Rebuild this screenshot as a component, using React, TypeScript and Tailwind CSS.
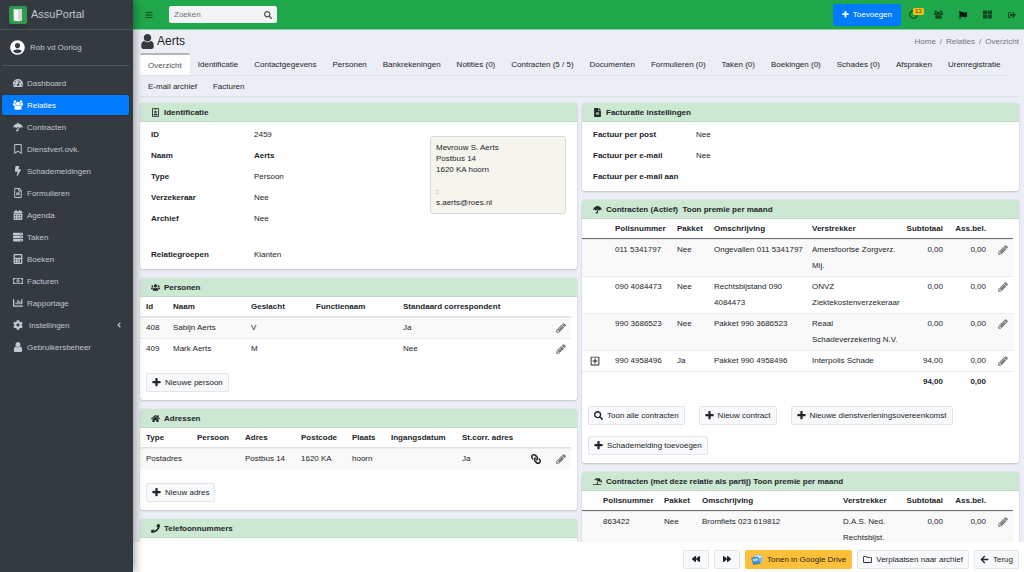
import type { ReactNode } from "react";
import {
  FaAngleLeft,
  FaArrowLeft,
  FaBackward,
  FaBars,
  FaBolt,
  FaCalculator,
  FaCalendarAlt,
  FaChartBar,
  FaCircleNotch,
  FaCog,
  FaFileAlt,
  FaFlag,
  FaForward,
  FaHome,
  FaLink,
  FaPhone,
  FaRegBookmark,
  FaRegFileAlt,
  FaRegFolder,
  FaRegIdBadge,
  FaRegMoneyBillAlt,
  FaRegPlusSquare,
  FaSearch,
  FaServer,
  FaSignOutAlt,
  FaTachometerAlt,
  FaThLarge,
  FaUmbrella,
  FaUmbrellaBeach,
  FaUserCircle,
  FaUsers,
} from "react-icons/fa";

type IconComp = (props: { className?: string }) => ReactNode;

function Plus({ className }: { className?: string }) {
  return (
    <svg viewBox="128 128 1536 1536" fill="currentColor" className={className}>
      <path d="M1600 736v192q0 40-28 68t-68 28h-416v416q0 40-28 68t-68 28h-192q-40 0-68-28t-28-68v-416h-416q-40 0-68-28t-28-68v-192q0-40 28-68t68-28h416v-416q0-40 28-68t68-28h192q40 0 68 28t28 68v416h416q40 0 68 28t28 68z" />
    </svg>
  );
}

function User({ className }: { className?: string }) {
  return (
    <svg viewBox="128 128 1536 1536" fill="currentColor" className={className}>
      <path d="M1536 1399q0 109-62.5 187t-150.5 78h-854q-88 0-150.5-78t-62.5-187q0-85 8.5-160.5t31.5-152 58.5-131 94-89 134.5-34.5q131 128 313 128t313-128q76 0 134.5 34.5t94 89 58.5 131 31.5 152 8.5 160.5zm-256-887q0 159-112.5 271.5t-271.5 112.5-271.5-112.5-112.5-271.5 112.5-271.5 271.5-112.5 271.5 112.5 112.5 271.5z" />
    </svg>
  );
}

function Group({ className }: { className?: string }) {
  return (
    <svg viewBox="0 0 1920 1792" fill="currentColor" className={className}>
      <path d="M593 896q-162 5-265 128h-134q-82 0-138-40.5t-56-118.5q0-353 124-353 6 0 43.5 21t97.5 42.5 119 21.5q67 0 133-23-5 37-5 66 0 159 93 293zm1071 637q0 120-73 189.5t-194 69.5h-874q-121 0-194-69.5t-73-189.5q0-53 3.5-103.5t14-109 26.5-108.5 43-97.5 62-81 85.5-53.5 111.5-20q10 0 43 21.5t73 48 107 48 135 21.5 135-21.5 107-48 73-48 43-21.5q61 0 111.5 20t85.5 53.5 62 81 43 97.5 26.5 108.5 14 109 3.5 103.5zm-1024-1277q0 106-75 181t-181 75-181-75-75-181 75-181 181-75 181 75 75 181zm704 384q0 159-112.5 271.5t-271.5 112.5-271.5-112.5-112.5-271.5 112.5-271.5 271.5-112.5 271.5 112.5 112.5 271.5zm576 225q0 78-56 118.5t-138 40.5h-134q-103-123-265-128 93-134 93-293 0-29-5-66 66 23 133 23 59 0 119-21.5t97.5-42.5 43.5-21q124 0 124 353zm-128-609q0 106-75 181t-181 75-181-75-75-181 75-181 181-75 181 75 75 181z" />
    </svg>
  );
}

function Pencil({ className }: { className?: string }) {
  return (
    <svg viewBox="96 128 1568 1568" fill="currentColor" className={className}>
      <path d="M491 1536l91-91-235-235-91 91v107h128v128h107zm523-928q0-22-22-22-10 0-17 7l-542 542q-7 7-7 17 0 22 22 22 10 0 17-7l542-542q7-7 7-17zm-54-192l416 416-832 832h-416v-416zm683 96q0 53-37 90l-166 166-416-416 166-165q36-38 90-38 53 0 91 38l235 234q37 39 37 91z" />
    </svg>
  );
}

const menu: { label: string; icon: IconComp; active?: boolean; tree?: boolean }[] = [
  { label: "Dashboard", icon: FaTachometerAlt },
  { label: "Relaties", icon: Group, active: true },
  { label: "Contracten", icon: FaUmbrella },
  { label: "Dienstverl.ovk.", icon: FaRegBookmark },
  { label: "Schademeldingen", icon: FaBolt },
  { label: "Formulieren", icon: FaRegFileAlt },
  { label: "Agenda", icon: FaCalendarAlt },
  { label: "Taken", icon: FaServer },
  { label: "Boeken", icon: FaCalculator },
  { label: "Facturen", icon: FaRegMoneyBillAlt },
  { label: "Rapportage", icon: FaChartBar },
  { label: "Instellingen", icon: FaCog, tree: true },
  { label: "Gebruikersbeheer", icon: User },
];

const tabs = [
  "Overzicht",
  "Identificatie",
  "Contactgegevens",
  "Personen",
  "Bankrekeningen",
  "Notities (0)",
  "Contracten (5 / 5)",
  "Documenten",
  "Formulieren (0)",
  "Taken (0)",
  "Boekingen (0)",
  "Schades (0)",
  "Afspraken",
  "Urenregistratie",
];

const contracten = [
  { polis: "011 5341797", pakket: "Nee", oms: "Ongevallen 011 5341797", verstrekker: "Amersfoortse Zorgverz. Mij.", sub: "0,00", ass: "0,00" },
  { polis: "090 4084473", pakket: "Nee", oms: "Rechtsbijstand 090 4084473", verstrekker: "ONVZ Ziektekostenverzekeraar", sub: "0,00", ass: "0,00" },
  { polis: "990 3686523", pakket: "Nee", oms: "Pakket 990 3686523", verstrekker: "Reaal Schadeverzekering N.V.", sub: "0,00", ass: "0,00" },
  { polis: "990 4958496", pakket: "Ja", oms: "Pakket 990 4958496", verstrekker: "Interpolis Schade", sub: "94,00", ass: "0,00", open: true },
];

function Logo() {
  return (
    <svg viewBox="0 0 18 18" className="size-[18px] shrink-0 rounded-xs shadow-md">
      <rect width="18" height="18" rx="1.5" fill="#2f9a4b" />
      <rect x="4.5" y="3" width="8.5" height="12" fill="#b9dcc1" />
      <path d="M5 3.2 9.6 4.4V15.6L5 14.4Z" fill="#f4f4f4" />
      <path d="M9.6 4.4 13 3V14.4L9.6 15.6Z" fill="#cfd8d1" />
    </svg>
  );
}

function DriveIcon() {
  return (
    <svg viewBox="0 0 24 22" className="h-[11px] w-3 shrink-0">
      <path d="M7 3 14 1 16 3 22 2 23 15 9 18Z" fill="#d8ecfa" stroke="#5aa0d8" />
      <path d="M1 8 14 6 18 19 5 21Z" fill="#3c92dc" stroke="#1c62ab" />
      <path d="M3 10 13 8.5 14.5 13 4.5 15Z" fill="#a9daf8" />
      <path d="M15 9 22 7 20 17 18 19Z" fill="#66b4ec" />
    </svg>
  );
}

function Sidebar() {
  return (
    <aside className="z-10 flex w-[133px] shrink-0 flex-col bg-[#343a40] text-[#c2c7d0] shadow-[2px_0_8px_rgba(0,0,0,0.35)]">
      <a href="#" className="flex h-[30px] items-center gap-1 border-b border-[#4b545c] pl-[9px] text-[11px]">
        <Logo />
        AssuPortal
      </a>
      <a href="#" className="mr-1 ml-[2px] flex h-9 items-center gap-[5px] border-b border-[#4f5962] pl-2">
        <FaUserCircle className="size-[15px] text-white" />
        Rob vd Oorlog
      </a>
      <nav className="mt-[7px] mr-1 ml-[2px]">
        <ul className="flex flex-col gap-[2px]">
          {menu.map(({ label, icon: Icon, active, tree }) => (
            <li key={label}>
              <a
                href="#"
                className={`flex h-5 items-center gap-1 rounded-xs pl-[11px] ${active ? "bg-[#007bff] text-white shadow-sm" : ""}`}
              >
                <Icon className="size-[10px]" />
                <span className={tree ? "pl-[2px]" : ""}>{label}</span>
                {tree && <FaAngleLeft className="mr-[6px] ml-auto size-2" />}
              </a>
            </li>
          ))}
        </ul>
      </nav>
    </aside>
  );
}

function Topbar() {
  return (
    <header className="flex h-[30px] shrink-0 items-center border-b border-[#8fd0a5] bg-[#1fa74c] pr-2 text-[#12481f]">
      <button aria-label="Menu" className="ml-3">
        <FaBars className="size-2" />
      </button>
      <label className="ml-4 flex h-[17px] w-[108px] items-center rounded-xs bg-[#f2f4f6] px-[5px] text-[#495057]">
        <input aria-label="Zoeken" placeholder="Zoeken" className="min-w-0 flex-1 placeholder:text-[#6c757d]" />
        <FaSearch className="size-2" />
      </label>
      <button className="ml-auto flex h-[22px] items-center gap-1 rounded-xs bg-[#007bff] px-[9px] text-white">
        <Plus className="size-[7px]" />
        Toevoegen
      </button>
      <div className="ml-2 flex items-center gap-4">
        <button aria-label="Meldingen" className="relative">
          <FaCircleNotch className="size-[9px]" />
          <span className="absolute -top-[2px] left-1 rounded-xs bg-[#ffc107] px-[2px] text-[6px] leading-[7px] text-[#1f2d3d]">13</span>
        </button>
        <button aria-label="Gebruikers">
          <Group className="size-[9px]" />
        </button>
        <button aria-label="Vlag">
          <FaFlag className="size-2 text-[#06180c]" />
        </button>
        <button aria-label="Overzicht">
          <FaThLarge className="size-[9px]" />
        </button>
        <button aria-label="Uitloggen">
          <FaSignOutAlt className="size-2" />
        </button>
      </div>
    </header>
  );
}

function Card({ title, icon: Icon, children }: { title: string; icon: IconComp; children?: ReactNode }) {
  return (
    <section className="overflow-hidden rounded-xs bg-white shadow-[0_0_1px_rgba(0,0,0,0.2),0_1px_2px_rgba(0,0,0,0.15)]">
      <h2 className="flex h-[19px] items-center gap-1 border-b border-[#c1dcc7] bg-[#cce7d2] pl-[11px] font-bold whitespace-pre">
        <Icon className="h-[9px] w-auto" />
        {title}
      </h2>
      {children}
    </section>
  );
}

function Row({ label, children }: { label: string; children?: ReactNode }) {
  return (
    <div className="flex h-[21px] items-center">
      <dt className="w-[103px] font-bold">{label}</dt>
      <dd>{children}</dd>
    </div>
  );
}

function LightButton({ icon: Icon, children }: { icon: IconComp; children: ReactNode }) {
  return (
    <button className="flex h-[19px] items-center gap-1 rounded-xs border border-[#e3e5e8] bg-[#f8f9fa] px-[5px] whitespace-nowrap">
      <Icon className="size-[9px]" />
      {children}
    </button>
  );
}

function EditButton() {
  return (
    <button aria-label="Bewerken" className="block text-[#7c7c7c]">
      <Pencil className="size-[10px]" />
    </button>
  );
}

function Table({ cols, head, dark, children }: { cols: string[]; head: string[]; dark?: boolean; children: ReactNode }) {
  return (
    <div className="pr-[6px]">
      <table className="w-full table-fixed border-separate border-spacing-0">
        <colgroup>
          {cols.map((c, i) => (
            <col key={i} className={c} />
          ))}
        </colgroup>
        <thead>
          <tr>
            {head.map((h, i) => (
              <th
                key={i}
                className={`h-5 border-b whitespace-nowrap ${dark ? "border-[#6c6f73]" : "border-[#dee2e6]"} ${
                  h === "Subtotaal" || h === "Ass.bel." ? "pr-[6px] text-right" : "pl-[6px] text-left"
                }`}
              >
                {h}
              </th>
            ))}
          </tr>
        </thead>
        <tbody>{children}</tbody>
      </table>
    </div>
  );
}

function Td({ right, bold, children }: { right?: boolean; bold?: boolean; children?: ReactNode }) {
  return (
    <td
      className={`border-t border-[#e9ebee] py-[2px] align-top leading-4 ${right ? "pr-[6px] text-right" : "pl-[6px]"} ${bold ? "font-bold" : ""}`}
    >
      {children}
    </td>
  );
}

function IconTd({ children }: { children: ReactNode }) {
  return <td className="border-t border-[#e9ebee] py-[5px] pl-[6px] align-top">{children}</td>;
}

export default function App() {
  return (
    <div className="flex h-screen overflow-hidden bg-[#ebeef4] font-['Liberation_Sans',Arial,sans-serif] text-[8px] leading-[11px] text-[#212529]">
      <Sidebar />
      <div className="flex min-w-0 flex-1 flex-col">
        <Topbar />
        <main className="min-h-0 flex-1 overflow-hidden pr-[5px] pl-[7px]">
          <div className="flex h-[23px] items-center">
            <User className="size-[15px] text-[#343a40]" />
            <h1 className="ml-[2px] text-[12px]">Aerts</h1>
            <nav className="ml-auto flex gap-1 text-[#6c757d]">
              <a href="#">Home</a>
              <span>/</span>
              <a href="#">Relaties</a>
              <span>/</span>
              <span>Overzicht</span>
            </nav>
          </div>
          <nav className="border-b border-[#dee2e6]">
            <ul className="mr-3 flex border-b border-[#dee2e6] whitespace-nowrap">
              {tabs.map((t, i) => (
                <li key={t}>
                  <a
                    href="#"
                    className={`flex h-[22px] items-center px-2 ${i === 0 ? "rounded-t-xs border-t-2 border-[#b4b7bb] bg-white text-[#495057]" : ""}`}
                  >
                    {t}
                  </a>
                </li>
              ))}
            </ul>
            <ul className="flex">
              <li>
                <a href="#" className="flex h-5 items-center px-2">E-mail archief</a>
              </li>
              <li>
                <a href="#" className="flex h-5 items-center px-2">Facturen</a>
              </li>
            </ul>
          </nav>

          <div className="mt-[6px] grid grid-cols-2 items-start gap-[5px]">
            <div className="flex min-w-0 flex-col gap-[9px]">
              <Card title="Identificatie" icon={FaRegIdBadge}>
                <div className="flex items-start justify-between px-[11px] pt-[2px] pb-1">
                  <dl>
                    <Row label="ID">2459</Row>
                    <Row label="Naam">
                      <b>Aerts</b>
                    </Row>
                    <Row label="Type">Persoon</Row>
                    <Row label="Verzekeraar">Nee</Row>
                    <Row label="Archief">Nee</Row>
                    <div className="mt-[15px]">
                      <Row label="Relatiegroepen">Klanten</Row>
                    </div>
                  </dl>
                  <address className="mt-3 w-[136px] rounded-[3px] border border-[#d9dad6] bg-[#f5f5ee] p-[5px] not-italic">
                    Mevrouw S. Aerts
                    <br />
                    Postbus 14
                    <br />
                    1620 KA hoorn
                    <br />
                    <br />:
                    <br />
                    s.aerts@roes.nl
                  </address>
                </div>
              </Card>

              <Card title="Personen" icon={FaUsers}>
                <Table
                  cols={["w-[27px]", "w-[78px]", "w-[65px]", "w-[87px]", "", "w-[21px]"]}
                  head={["Id", "Naam", "Geslacht", "Functienaam", "Standaard correspondent", ""]}
                >
                  <tr className="bg-[#f9f9f9]">
                    <Td>408</Td>
                    <Td>Sabijn Aerts</Td>
                    <Td>V</Td>
                    <Td />
                    <Td>Ja</Td>
                    <IconTd>
                      <EditButton />
                    </IconTd>
                  </tr>
                  <tr>
                    <Td>409</Td>
                    <Td>Mark Aerts</Td>
                    <Td>M</Td>
                    <Td />
                    <Td>Nee</Td>
                    <IconTd>
                      <EditButton />
                    </IconTd>
                  </tr>
                </Table>
                <div className="flex px-[6px] pt-[14px] pb-2">
                  <LightButton icon={Plus}>Nieuwe persoon</LightButton>
                </div>
              </Card>

              <Card title="Adressen" icon={FaHome}>
                <Table
                  cols={["w-[51px]", "w-[48px]", "w-[56px]", "w-[51px]", "w-[39px]", "w-[71px]", "", "w-[25px]", "w-[21px]"]}
                  head={["Type", "Persoon", "Adres", "Postcode", "Plaats", "Ingangsdatum", "St.corr. adres", "", ""]}
                >
                  <tr className="bg-[#f9f9f9]">
                    <Td>Postadres</Td>
                    <Td />
                    <Td>Postbus 14</Td>
                    <Td>1620 KA</Td>
                    <Td>hoorn</Td>
                    <Td />
                    <Td>Ja</Td>
                    <IconTd>
                      <button aria-label="Koppelen" className="block">
                        <FaLink className="size-[10px] -scale-x-100" />
                      </button>
                    </IconTd>
                    <IconTd>
                      <EditButton />
                    </IconTd>
                  </tr>
                </Table>
                <div className="flex px-[6px] pt-[14px] pb-2">
                  <LightButton icon={Plus}>Nieuw adres</LightButton>
                </div>
              </Card>

              <Card title="Telefoonnummers" icon={FaPhone}>
                <div className="h-10" />
              </Card>
            </div>

            <div className="flex min-w-0 flex-col gap-[9px]">
              <Card title="Facturatie instellingen" icon={FaFileAlt}>
                <dl className="px-[11px] pt-[2px] pb-1">
                  <Row label="Factuur per post">Nee</Row>
                  <Row label="Factuur per e-mail">Nee</Row>
                  <Row label="Factuur per e-mail aan" />
                </dl>
              </Card>

              <Card title="Contracten (Actief)  Toon premie per maand" icon={FaUmbrella}>
                <Table
                  dark
                  cols={["w-[27px]", "w-[62px]", "w-[37px]", "", "w-[97px]", "w-[46px]", "w-[43px]", "w-[21px]"]}
                  head={["", "Polisnummer", "Pakket", "Omschrijving", "Verstrekker", "Subtotaal", "Ass.bel.", ""]}
                >
                  {contracten.map((c) => (
                    <tr key={c.polis} className="odd:bg-[#f9f9f9]">
                      <IconTd>
                        {c.open && (
                          <button aria-label="Uitklappen" className="ml-[2px] block">
                            <FaRegPlusSquare className="size-[10px]" />
                          </button>
                        )}
                      </IconTd>
                      <Td>{c.polis}</Td>
                      <Td>{c.pakket}</Td>
                      <Td>{c.oms}</Td>
                      <Td>{c.verstrekker}</Td>
                      <Td right>{c.sub}</Td>
                      <Td right>{c.ass}</Td>
                      <IconTd>
                        <EditButton />
                      </IconTd>
                    </tr>
                  ))}
                  <tr>
                    <Td />
                    <Td />
                    <Td />
                    <Td />
                    <Td />
                    <Td right bold>94,00</Td>
                    <Td right bold>0,00</Td>
                    <Td />
                  </tr>
                </Table>
                <div className="flex flex-wrap gap-x-[14px] gap-y-[11px] px-[6px] pt-[14px] pb-2">
                  <LightButton icon={FaSearch}>Toon alle contracten</LightButton>
                  <LightButton icon={Plus}>Nieuw contract</LightButton>
                  <LightButton icon={Plus}>Nieuwe dienstverleningsovereenkomst</LightButton>
                  <LightButton icon={Plus}>Schademelding toevoegen</LightButton>
                </div>
              </Card>

              <Card title="Contracten (met deze relatie als partij) Toon premie per maand" icon={FaUmbrellaBeach}>
                <Table
                  dark
                  cols={["w-[15px]", "w-[61px]", "w-[38px]", "", "w-[66px]", "w-[46px]", "w-[43px]", "w-[21px]"]}
                  head={["", "Polisnummer", "Pakket", "Omschrijving", "Verstrekker", "Subtotaal", "Ass.bel.", ""]}
                >
                  <tr className="bg-[#f9f9f9]">
                    <Td />
                    <Td>863422</Td>
                    <Td>Nee</Td>
                    <Td>Bromfiets 023 619812</Td>
                    <Td>D.A.S. Ned. Rechtsbijst.</Td>
                    <Td right>0,00</Td>
                    <Td right>0,00</Td>
                    <IconTd>
                      <EditButton />
                    </IconTd>
                  </tr>
                </Table>
              </Card>
            </div>
          </div>
        </main>

        <footer className="flex h-[30px] shrink-0 items-center justify-end gap-[5px] bg-white pt-1 pr-[5px]">
          <button aria-label="Vorige" className="flex h-[19px] w-[26px] items-center justify-center rounded-xs border border-[#e3e5e8] bg-[#f8f9fa]">
            <FaBackward className="size-2" />
          </button>
          <button aria-label="Volgende" className="flex h-[19px] w-[26px] items-center justify-center rounded-xs border border-[#e3e5e8] bg-[#f8f9fa]">
            <FaForward className="size-2" />
          </button>
          <button className="flex h-[19px] items-center gap-1 rounded-xs bg-[#ffbf38] px-[6px]">
            <DriveIcon />
            Tonen in Google Drive
          </button>
          <LightButton icon={FaRegFolder}>Verplaatsen naar archief</LightButton>
          <LightButton icon={FaArrowLeft}>Terug</LightButton>
        </footer>
      </div>
    </div>
  );
}
